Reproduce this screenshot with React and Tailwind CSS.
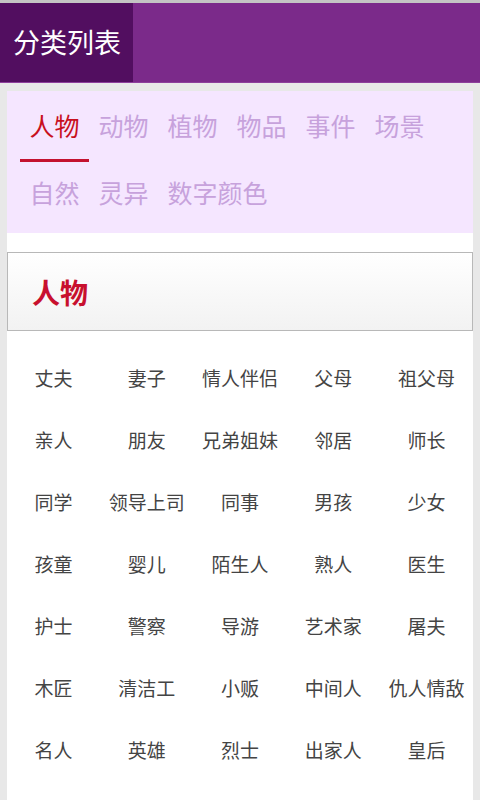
const tabs = ["人物", "动物", "植物", "物品", "事件", "场景", "自然", "灵异", "数字颜色"];

const people = [
  "丈夫", "妻子", "情人伴侣", "父母", "祖父母",
  "亲人", "朋友", "兄弟姐妹", "邻居", "师长",
  "同学", "领导上司", "同事", "男孩", "少女",
  "孩童", "婴儿", "陌生人", "熟人", "医生",
  "护士", "警察", "导游", "艺术家", "屠夫",
  "木匠", "清洁工", "小贩", "中间人", "仇人情敌",
  "名人", "英雄", "烈士", "出家人", "皇后",
];

export default function App() {
  return (
    <div
      className="h-[800px] w-[480px] overflow-hidden bg-[#e8e8e8]"
      style={{ fontFamily: '"Noto Sans CJK SC", "Noto Sans", sans-serif' }}
    >
      <div className="h-[3px] bg-[#c4c4c4]" />
      <header className="flex h-[80px] bg-[#7b2a8a] border-b border-[#8e3f9c]">
        <div className="flex w-[133px] items-center bg-[#520e60] pl-[13px] text-[27px] text-white">
          分类列表
        </div>
      </header>

      <main className="mx-[7px] mt-[8px] h-full bg-white">
        <nav className="flex flex-wrap bg-[#f5e6ff] px-[13px] py-1">
          {tabs.map((t, i) => (
            <div
              key={t}
              className={
                i === 0
                  ? "flex h-[67px] items-center border-b-[3px] border-[#c4122f] px-[9.5px] pb-[3px] text-[25px] text-[#c8101e]"
                  : "flex h-[67px] items-center border-b-[3px] border-transparent px-[9.5px] pb-[3px] text-[25px] text-[#c7a2dc]"
              }
            >
              {t}
            </div>
          ))}
        </nav>

        <div className="mt-[19px] flex h-[79px] items-center border border-[#b8b8b8] bg-gradient-to-b from-white to-[#f2f2f2] pl-[24px] text-[28px] font-bold text-[#c8102e]">
          人物
        </div>

        <div className="grid grid-cols-5 pt-[16px]">
          {people.map((p) => (
            <div key={p} className="flex h-[62px] items-center justify-center text-[19px] text-[#444]">
              {p}
            </div>
          ))}
        </div>
      </main>
    </div>
  );
}
